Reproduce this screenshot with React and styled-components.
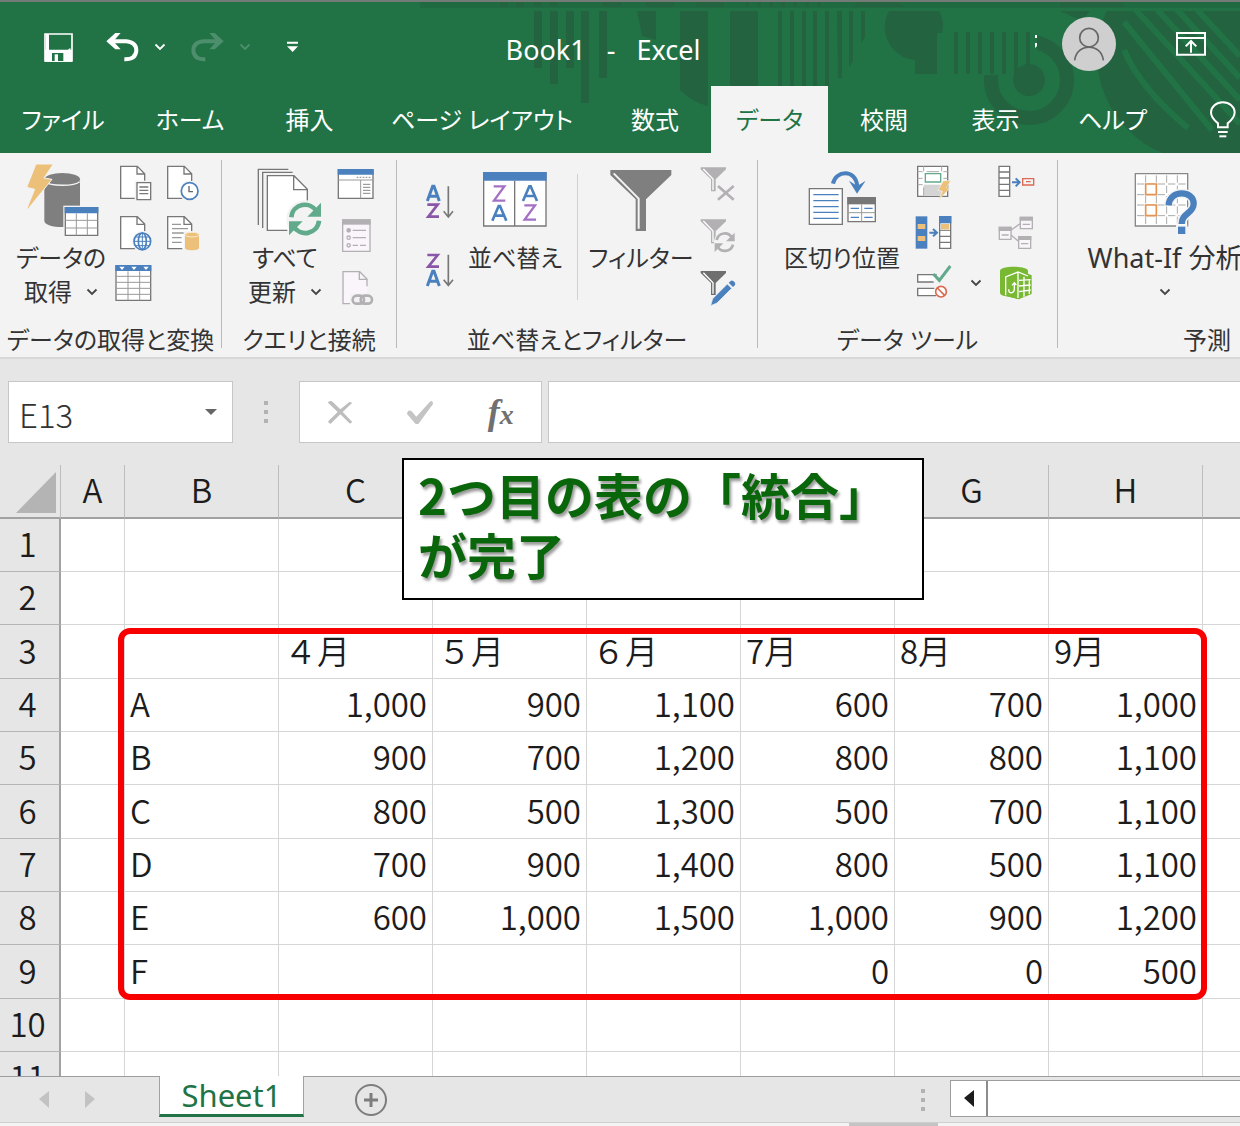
import React from "react";
import styled, { createGlobalStyle, css } from "styled-components";

const GREEN = "#217346";
const DARK = "#23633f";
const BLUE = "#4a80bd";
const GRAY = "#7f7f7f";
const PALE = "#b3b0b3";
const AMBER = "#ecc078";
const TEAL = "#62aa8c";
const UI = `"Noto Sans", "Noto Sans CJK JP", sans-serif`;
const CELL = `"Noto Sans CJK JP", sans-serif`;

const GlobalStyle = createGlobalStyle`
  * { box-sizing: border-box; }
  body { margin: 0; background: #e6e6e6; }
  button, input { font: inherit; color: inherit; margin: 0; padding: 0; border: 0; background: none; border-radius: 0; }
  svg { display: block; overflow: visible; flex: none; }
`;

const Window = styled.div`
  display: flex;
  flex-direction: column;
  height: 100vh;
  overflow: hidden;
  font-family: ${UI};
  font-size: 24px;
  line-height: 34px;
  font-feature-settings: "palt";
  color: #333;
`;

/* ---------- title bar and tabs ---------- */
const Header = styled.header`
  position: relative;
  background: ${GREEN};
  border-top: 2px solid #747b76;
  color: #fff;
  overflow: hidden;
`;
const Backdrop = styled.svg`
  position: absolute;
  top: -2px;
  right: 0;
`;
const TitleBar = styled.div`
  position: relative;
  display: grid;
  grid-template-columns: 400px 406px 1fr;
  align-items: center;
  height: 84px;
`;
const QuickAccess = styled.div`
  display: flex;
  align-items: center;
  padding: 6px 0 0 44px;
`;
const ToolButton = styled.button`
  display: flex;
  flex: none;
  align-items: center;
  justify-content: center;
  width: ${(p) => p.$w || 36}px;
  height: 36px;
  && { margin-left: ${(p) => p.$gap || 0}px; }
`;
const Title = styled.h1`
  margin: 0;
  padding-top: 12px;
  font-size: 27px;
  font-weight: 400;
  text-align: center;
  white-space: pre;
`;
const Account = styled.div`
  display: flex;
  align-items: center;
  justify-content: flex-end;
  gap: 60px;
  padding-right: 34px;
`;
const Avatar = styled.button`
  && { border-radius: 50%; background: #d0cfd0; }
  width: 54px;
  height: 54px;
`;
const Tabs = styled.nav`
  position: relative;
  display: flex;
  height: 67px;
`;
const Tab = styled.button`
  flex: none;
  width: ${(p) => p.$w}px;
  white-space: nowrap;
  ${(p) =>
    p.$active &&
    css`
      && { background: #f3f3f3; color: ${GREEN}; }
    `}
`;
const Tell = styled.button`
  display: flex;
  align-items: center;
  && { padding-left: 36px; }
`;

/* ---------- ribbon ---------- */
const Ribbon = styled.div`
  display: flex;
  flex: none;
  overflow: hidden;
  background: #f3f3f3;
  border-bottom: 2px solid #d8d8d8;
`;
const Group = styled.section`
  flex: none;
  display: flex;
  flex-direction: column;
  justify-content: space-between;
  width: ${(p) => p.$w}px;
  height: 204px;
  padding-top: 12px;
`;
const Body = styled.div`
  display: flex;
  align-items: flex-start;
  gap: 8px;
  padding-left: ${(p) => p.$left}px;
`;
const GroupLabel = styled.div`
  text-align: center;
  white-space: nowrap;
`;
const Rule = styled.div`
  flex: none;
  width: 1px;
  margin: 7px 0 9px;
  background: #b9b9b9;
`;
const InnerRule = styled.div`
  width: 1px;
  height: 126px;
  margin: 9px 4px 0;
  background: #d0d0d0;
`;
const Big = styled.button`
  display: flex;
  flex-direction: column;
  align-items: center;
  width: ${(p) => p.$w}px;
  white-space: nowrap;
`;
const Line = styled.span`
  display: flex;
  align-items: center;
  justify-content: center;
  gap: 14px;
  height: 34px;
  font-size: ${(p) => (p.$latin ? 27 : 24)}px;
  &:first-of-type { margin-top: 4px; }
`;
const Smalls = styled.div`
  display: grid;
  grid-template-columns: ${(p) => p.$cols || "36px"};
  grid-auto-rows: 36px;
  gap: ${(p) => p.$gap || "14px 12px"};
  padding-top: ${(p) => p.$top || 0}px;
  justify-items: center;
`;

/* ---------- formula bar ---------- */
const Workspace = styled.main`
  position: relative;
  flex: 1;
  min-height: 0;
  overflow: hidden;
  background: #fff;
  font-family: ${CELL};
`;
const FormulaBar = styled.div`
  display: flex;
  align-items: center;
  padding: 22px 0 22px 8px;
  background: #e6e6e6;
`;
const Field = styled.div`
  display: flex;
  align-items: center;
  width: ${(p) => p.$w}px;
  height: 62px;
  background: #fff;
  border: 1px solid #c6c6c6;
`;
const NameInput = styled.input`
  width: 180px;
  height: 60px;
  && { padding: 4px 0 0 10px; font-size: 33px; font-weight: 300; color: #333; }
`;
const Grip = styled.div`
  display: grid;
  gap: 5px;
  width: ${(p) => p.$w}px;
  justify-content: center;
  align-content: center;
  &::before, &::after, & > i { content: ""; width: 4px; height: 4px; background: #b2b2b2; }
`;
const FormulaInput = styled.input`
  flex: 1;
  min-width: 0;
  height: 62px;
  && { margin-left: 6px; padding: 0 10px; background: #fff; border: 1px solid #c6c6c6; border-right: 0; }
`;
const FxButton = styled.button`
  flex: 1;
  height: 60px;
  display: flex;
  align-items: center;
  justify-content: center;
  && { font: italic bold 36px/40px "Liberation Serif", serif; color: #707070; }
  small { font-size: 28px; padding-top: 6px; }
`;

/* ---------- sheet ---------- */
const Sheet = styled.table`
  table-layout: fixed;
  width: 100%;
  border-collapse: separate;
  border-spacing: 0;
  font-size: 33px;
  line-height: 40px;
  font-weight: 350;
  font-feature-settings: normal;
  color: #1c1c1c;
  tbody tr { height: 53px; }
  tbody tr:nth-child(3n) { height: 54px; }
  th { font-weight: 350; }
  tr > :last-child { border-right: 0; }
`;
const ColHead = styled.th`
  height: 54px;
  padding: 0 0 4px;
  background: #e6e6e6;
  border-right: 1px solid #bdbdbd;
  border-bottom: 2px solid #a2a2a2;
`;
const Corner = styled(ColHead)`
  svg { margin: 6px 4px 0 auto; }
`;
const RowHead = styled.th`
  padding: 0 4px 4px 0;
  background: #e6e6e6;
  border-right: 2px solid #a2a2a2;
  border-bottom: 1px solid #b5b5b5;
`;
const Cell = styled.td`
  padding: 0 5px 4px;
  white-space: nowrap;
  text-align: ${(p) => (p.$num ? "right" : "left")};
  border-right: 1px solid #d6d6d6;
  border-bottom: 1px solid #d6d6d6;
`;
const Highlight = styled.div`
  position: absolute;
  top: 269px;
  left: 118px;
  width: 1089px;
  height: 372px;
  border: 6px solid #f80000;
  border-radius: 12px;
`;
const Callout = styled.p`
  position: absolute;
  top: 99px;
  left: 402px;
  width: 522px;
  height: 142px;
  margin: 0;
  padding: 4px 14px;
  background: #fff;
  border: 2px solid #000;
  font-size: 49px;
  line-height: 60px;
  font-weight: 700;
  font-feature-settings: normal;
  color: #0a660a;
  text-shadow: 2px 3px 3px #9a9a9a;
`;

/* ---------- bottom bars ---------- */
const SheetBar = styled.footer`
  display: flex;
  flex: none;
  height: 46px;
  background: #e6e6e6;
  border-top: 1px solid #9d9d9d;
`;
const Pager = styled.div`
  display: flex;
  align-items: center;
  justify-content: center;
  gap: 10px;
  width: 159px;
  padding-right: 25px;
`;
const SheetTab = styled.button`
  width: 145px;
  height: 41px;
  && {
    margin-top: -1px;
    background: #fff;
    color: ${GREEN};
    font-size: 31px;
    border: 1px solid #a2a2a2;
    border-top: 0;
    border-bottom: 3px solid ${GREEN};
  }
`;
const AddSheet = styled.button`
  width: 36px;
  height: 45px;
  && { margin-left: 50px; margin-right: auto; }
`;
const Scroll = styled.div`
  display: flex;
  width: 290px;
  height: 37px;
  margin-top: 3px;
  background: #fff;
  border: 1px solid #9d9d9d;
  border-right: 0;
`;
const ScrollButton = styled.button`
  display: flex;
  align-items: center;
  justify-content: center;
  width: 37px;
  && { border-right: 2px solid #8c8c8c; }
`;
const Status = styled.div`
  flex: none;
  display: flex;
  justify-content: flex-end;
  height: 4px;
  padding-right: 302px;
  background: #f3f3f3;
  border-top: 1px solid #cfcfcf;
  &::after { content: ""; width: 89px; background: #c4c4c4; }
`;

/* ---------- drawings: three drawing units to one pixel ---------- */
const Draw = ({ x, y, w = 36, h = w, children }) => (
  <svg width={w} height={h} viewBox={`${x} ${y} ${w * 3} ${h * 3}`} fill="none" aria-hidden="true">
    {children}
  </svg>
);
const Chevron = ({ color = "#444" }) => (
  <svg width="12" height="8" viewBox="0 0 12 8" fill="none" aria-hidden="true">
    <path d="M1.500 1.500L6 6L10.500 1.500" stroke={color} strokeWidth="1.800" />
  </svg>
);
const Doc = ({ x, y, stroke = "#777", fill = "#fff" }) => (
  <g transform={`translate(${x} ${y})`} stroke={stroke} strokeWidth="4">
    <path d="M0 0H50L72 22V96H0Z" fill={fill} stroke="none" />
    <path d="M44 96H0V0H50L72 22V44M49 0V23H72" />
  </g>
);
const Funnel = ({ x, y, c }) => (
  <g transform={`translate(${x} ${y})`}>
    <path d="M0 0H76V6L45 36V72H31V36L0 6Z" fill={c} />
    <path d="M8 5L37 35V68" stroke="#fff" strokeWidth="4" />
  </g>
);
const SmallButton = ({ label, x, y, children }) => (
  <ToolButton aria-label={label}>
    <Draw x={x} y={y}>{children}</Draw>
  </ToolButton>
);

const HeaderArt = () => (
  <Backdrop width="820" height="153" viewBox="420 0 820 153" fill={DARK} aria-hidden="true">
    <defs>
      <clipPath id="disc"><circle cx="1203" cy="55" r="106" /></clipPath>
      <clipPath id="ring"><path d="M980 75H1037V30H1080V130H980Z" /></clipPath>
    </defs>
    <path d="M534 11h8v57h-8zM550 11h8v73h-8zM566 11h8v57h-8zM581 11h8v92h-8zM599 11h8v67h-8z" />
    <path d="M637 11h19v29l-14-4zM680 11h28v95q-16-4-28-16zM730 11h28v75h-28z" />
    <path d="M778 11h4v75h-4zM790 11h4v75h-4zM802 11h4v75h-4zM813 11h4v75h-4zM825 11h4v75h-4zM837 11h5v67h-4zM849 11h4v50l-4 6zM861 11h4v26l-4 6z" />
    <path d="M889 11h50q6 10 3 22h-5v41h-22v-14a33 33 0 0 1-26-49z" />
    <path d="M954 32h4v42h-4zM966 32h4v42h-4zM978 32h4v42h-4zM990 32h4v42h-4zM1002 32h4v42h-4zM1014 32h4v42h-4zM1026 32h4v34h-4z" />
    <g clipPath="url(#ring)">
      <circle cx="1029" cy="80" r="38" fill="none" stroke={DARK} strokeWidth="14" />
    </g>
    <circle cx="1029" cy="80" r="16" />
    <g clipPath="url(#disc)">
      <rect x="1090" y="11" width="150" height="142" />
      <g stroke={GREEN} strokeWidth="6">
        <path d="M1124 50Q1140 88 1188 128M1124 22L1212 130M1134 8L1240 124M1152 4L1240 100M1170 2L1240 78M1188 0L1240 56" />
      </g>
    </g>
    <path d="M1060 11h30l-8 10z" />
    <rect x="420" y="2" width="820" height="6" fill="#1f6a41" />
    <path d="M500 2h8v5h-8zM516 2h8v5h-8zM534 2h8v5h-8zM550 2h8v5h-8zM602 2h20v5h-20zM646 2h28v5h-28zM696 2h28v5h-28zM745 2h4v5h-4zM757 2h4v5h-4zM769 2h4v5h-4zM781 2h4v5h-4zM793 2h4v5h-4zM805 2h4v5h-4zM817 2h4v5h-4zM858 2h40l6 5h-50zM1060 2h60l6 5h-66z" />
    <path d="M1035 35h2v3h-2zM1035 43h2v3l-2 2z" fill="#fff" />
  </Backdrop>
);

const TABS = [
  ["ファイル", 126], ["ホーム", 128], ["挿入", 111], ["ページ レイアウト", 234], ["数式", 112],
  ["データ", 117], ["校閲", 112], ["表示", 111], ["ヘルプ", 123],
];
const COLUMNS = ["A", "B", "C", "D", "E", "F", "G", "H", "I"];
/* headings that lie clear of the callout and inside the window */
const NAMED = ["A", "B", "C", "G", "H"];
const ROWS = [
  [], [],
  ["", "", "４月", "５月", "６月", "7月", "8月", "9月"],
  ["", "A", "1,000", "900", "1,100", "600", "700", "1,000"],
  ["", "B", "900", "700", "1,200", "800", "800", "1,100"],
  ["", "C", "800", "500", "1,300", "500", "700", "1,100"],
  ["", "D", "700", "900", "1,400", "800", "500", "1,100"],
  ["", "E", "600", "1,000", "1,500", "1,000", "900", "1,200"],
  ["", "F", "", "", "", "0", "0", "500"],
  [], [],
];

const RibbonArea = () => (
  <Ribbon>
    <Group $w={221}>
      <Body $left={16}>
        <Big $w={90}>
          <Draw x={75} y={45} w={72}>
            <path d="M133 92V212C133 224 158 231 187 231S240 224 240 212V92Z" fill={GRAY} />
            <ellipse cx="187" cy="88" rx="53" ry="19" fill={GRAY} />
            <path d="M136 96C150 108 222 110 239 95" stroke="#f3f3f3" strokeWidth="4" />
            <path d="M108 42H160L132 84L156 88L84 177H80L104 118L80 112Z" fill={AMBER} stroke="#f3f3f3" strokeWidth="3" />
            <rect x="190" y="167" width="109" height="94" fill="#f3f3f3" />
            <path d="M196 173H293V256H196Z" fill="#fff" stroke="#777" strokeWidth="4" />
            <path d="M194 171H295V190H194Z" fill={BLUE} />
            <path d="M196 211H293M196 234H293M229 190V256M262 190V256" stroke="#999" strokeWidth="3" />
          </Draw>
          <Line>データの</Line>
          <Line>取得<Chevron /></Line>
        </Big>
        <Smalls $cols="36px 36px">
          <SmallButton label="テキストまたは CSV から" x={342} y={45}>
            <Doc x={362} y={49} />
            <path d="M404 92H458V155H404Z" fill="#f3f3f3" />
            <path d="M411 98H452V149H411ZM418 111H445M418 121H445M418 131H445" fill="#fff" stroke="#777" strokeWidth="4" />
          </SmallButton>
          <SmallButton label="最近使ったソース" x={486} y={45}>
            <Doc x={503} y={49} />
            <circle cx="569" cy="123" r="31" fill="#f3f3f3" />
            <circle cx="569" cy="123" r="25" fill="#fff" stroke={BLUE} strokeWidth="5" />
            <path d="M567 108V125H579" stroke="#666" strokeWidth="4" />
          </SmallButton>
          <SmallButton label="Web から" x={342} y={195}>
            <Doc x={362} y={200} />
            <circle cx="427" cy="274" r="31" fill="#f3f3f3" />
            <g stroke={BLUE} strokeWidth="5">
              <circle cx="427" cy="274" r="25" fill="#fff" />
              <ellipse cx="427" cy="274" rx="12" ry="25" />
              <path d="M402 274H452M407 261H447M407 287H447M427 249V299" strokeWidth="3" />
            </g>
          </SmallButton>
          <SmallButton label="既存の接続" x={486} y={195}>
            <Doc x={503} y={200} />
            <path d="M516 223H543M516 236H564M516 249H552M516 263H545M516 277H545" stroke="#999" strokeWidth="4" />
            <path d="M551 244H600V303H551Z" fill="#f3f3f3" />
            <path d="M555 254V294C555 303 597 303 597 294V254Z" fill={AMBER} />
            <ellipse cx="576" cy="254" rx="21" ry="7" fill={AMBER} stroke="#f8ead0" strokeWidth="3" />
          </SmallButton>
          <SmallButton label="テーブルまたは範囲から" x={342} y={345}>
            <path d="M348 348H452V451H348Z" fill="#fff" stroke="#777" strokeWidth="4" />
            <path d="M346 345H454V363H346Z" fill={BLUE} />
            <path d="M358 350H374L366 360ZM394 350H410L402 360ZM430 350H446L438 360Z" fill="#fff" />
            <path d="M348 379H452M348 397H452M348 415H452M348 433H452M384 364V451M419 364V451" stroke="#999" strokeWidth="3" />
          </SmallButton>
        </Smalls>
      </Body>
      <GroupLabel>データの取得と変換</GroupLabel>
    </Group>
    <Rule />
    <Group $w={174}>
      <Body $left={18}>
        <Big $w={90}>
          <Draw x={747} y={45} w={72}>
            <path d="M775 225V58H865M788 234V67H878" stroke="#777" strokeWidth="4" />
            <path d="M802 77H882L922 118V241H802Z" fill="#fff" />
            <path d="M862 241H802V77H882L922 118V155M881 77V119H922" stroke="#777" strokeWidth="4" />
            <circle cx="915" cy="207" r="56" fill="#f3f3f3" />
            <g stroke={TEAL} strokeWidth="14">
              <path d="M874 202C878 160 930 152 950 184M957 212C952 254 900 262 880 228" />
            </g>
            <path d="M963 158V200H922ZM867 256V214H908Z" fill={TEAL} />
          </Draw>
          <Line>すべて</Line>
          <Line>更新<Chevron /></Line>
        </Big>
        <Smalls>
          <SmallButton label="クエリと接続" x={1014} y={45}>
            <path d="M1015 60H1119V145H1015Z" fill="#fff" stroke="#777" strokeWidth="4" />
            <path d="M1013 57H1121V74H1013Z" fill={BLUE} />
            <path d="M1015 90H1119M1082 90V145" stroke="#999" strokeWidth="3" />
            <path d="M1070 82H1114" stroke="#999" strokeWidth="4" strokeDasharray="5 4" />
            <path d="M1089 103H1111M1089 112H1111M1089 121H1111M1089 130H1111" stroke="#888" strokeWidth="3" />
          </SmallButton>
          <SmallButton label="プロパティ" x={1014} y={195}>
            <path d="M1028 210H1110V304H1028Z" fill="#faf5fb" stroke={PALE} strokeWidth="4" />
            <path d="M1026 208H1112V224H1026Z" fill={PALE} />
            <g stroke={PALE} strokeWidth="4">
              <path d="M1058 241H1098M1058 263H1098M1058 286H1074M1080 286H1098" />
              <circle cx="1046" cy="241" r="5" fill={PALE} /><circle cx="1046" cy="263" r="5" /><circle cx="1046" cy="286" r="5" />
            </g>
          </SmallButton>
          <SmallButton label="リンクの編集" x={1014} y={345}>
            <Doc x={1029} y={365} stroke={PALE} fill="#faf5fb" />
            <rect x="1050" y="430" width="74" height="38" fill="#f3f3f3" />
            <g stroke={PALE} strokeWidth="8">
              <rect x="1058" y="437" width="34" height="24" rx="12" /><rect x="1082" y="437" width="34" height="24" rx="12" />
            </g>
          </SmallButton>
        </Smalls>
      </Body>
      <GroupLabel>クエリと接続</GroupLabel>
    </Group>
    <Rule />
    <Group $w={360}>
      <Body $left={24}>
        <Smalls $top={19} $gap="32px">
          <SmallButton label="昇順" x={93} y={102}>
            <path d="M112 153L128 109H132L148 153M118 139H142" stroke={BLUE} strokeWidth="9" />
            <path d="M112 164H143L115 200H147" stroke="#8a56a8" strokeWidth="8" />
            <path d="M175 109V201M161 184L175 201L189 184" stroke="#777" strokeWidth="5" />
          </SmallButton>
          <SmallButton label="降順" x={93} y={306}>
            <path d="M112 315H143L115 350H147" stroke="#8a56a8" strokeWidth="8" />
            <path d="M112 408L128 364H132L148 408M118 394H142" stroke={BLUE} strokeWidth="9" />
            <path d="M175 314V406M161 389L175 406L189 389" stroke="#777" strokeWidth="5" />
          </SmallButton>
        </Smalls>
        <Big $w={100}>
          <Draw x={267} y={45} w={72}>
            <path d="M281 68H468V228H281Z" fill="#fff" stroke="#777" strokeWidth="4" />
            <path d="M279 66H470V92H279Z" fill={BLUE} />
            <path d="M374 92V228" stroke="#777" strokeWidth="4" />
            <g stroke="#a470c4" strokeWidth="7">
              <path d="M311 109H343L312 152H346M403 166H435L404 209H438" />
            </g>
            <g stroke={BLUE} strokeWidth="8">
              <path d="M307 212L326 168H330L349 212M314 197H342M399 153L418 109H422L441 153M406 138H434" />
            </g>
          </Draw>
          <Line>並べ替え</Line>
        </Big>
        <InnerRule />
        <Big $w={102}>
          <Draw x={645} y={45} w={72}>
            <path d="M661 60H844V75L768 148V243H737V148L661 75Z" fill={GRAY} />
            <path d="M671 70L746 146V236" stroke="#f3f3f3" strokeWidth="6" />
          </Draw>
          <Line>フィルター</Line>
        </Big>
        <Smalls>
          <SmallButton label="クリア" x={930} y={45}>
            <Funnel x={932} y={52} c={PALE} />
            <path d="M984 108L1031 149M1031 108L984 149" stroke={PALE} strokeWidth="8" />
          </SmallButton>
          <SmallButton label="再適用" x={930} y={195}>
            <Funnel x={932} y={208} c={PALE} />
            <circle cx="1004" cy="276" r="32" fill="#f3f3f3" />
            <path d="M980 270C986 246 1016 244 1026 264M1029 284C1023 308 992 308 983 290" stroke={PALE} strokeWidth="8" />
            <path d="M1034 248V274H1008ZM974 306V280H1000Z" fill={PALE} />
          </SmallButton>
          <SmallButton label="詳細設定" x={930} y={345}>
            <Funnel x={932} y={363} c="#6f6f6f" />
            <path d="M962 467L968 446L1012 402L1025 415L981 459Z" fill={BLUE} stroke="#f3f3f3" strokeWidth="2" />
            <path d="M1016 398L1023 392Q1029 390 1034 397Q1037 402 1035 405L1029 411Z" fill={BLUE} />
          </SmallButton>
        </Smalls>
      </Body>
      <GroupLabel>並べ替えとフィルター</GroupLabel>
    </Group>
    <Rule />
    <Group $w={299}>
      <Body $left={18}>
        <Big $w={132}>
          <Draw x={168} y={45} w={72}>
            <path d="M178 116H277V223H178Z" fill="#fff" stroke="#777" strokeWidth="4" />
            <path d="M190 134H266M190 152H266M190 170H266M190 187H266M190 205H266" stroke={BLUE} strokeWidth="4" />
            <path d="M249 101C256 62 316 54 322 108" stroke={BLUE} strokeWidth="12" />
            <path d="M297 92L321 131L347 92L322 108Z" fill={BLUE} />
            <path d="M294 143H376V215H294Z" fill="#fff" stroke="#777" strokeWidth="4" />
            <path d="M292 141H378V163H292Z" fill="#777" />
            <path d="M335 163V215M294 188H376" stroke="#999" strokeWidth="3" />
            <path d="M302 175H327M343 175H368M302 202H327M343 202H368" stroke={BLUE} strokeWidth="4" />
          </Draw>
          <Line>区切り位置</Line>
        </Big>
        <Smalls $cols="36px 47px 36px" $gap="14px 0">
          <SmallButton label="フラッシュ フィル" x={498} y={45}>
            <path d="M503 49H593V139H503Z" fill="#fff" stroke="#777" strokeWidth="4" />
            <path d="M521 104H575V137H521Z" fill="#d4d4d4" />
            <path d="M503 65H518M530 65H567M580 65H593M503 85H518M503 104H518M580 85H593M521 49V64M575 49V64M521 112V137" stroke="#aaa" strokeWidth="3" />
            <path d="M526 71H572V96H526Z" fill="#fff" stroke={TEAL} strokeWidth="4" />
            <path d="M580 92H602L590 113L600 115L566 149L577 124L564 121Z" fill={AMBER} stroke="#f3f3f3" strokeWidth="2" />
          </SmallButton>
          <span />
          <SmallButton label="重複の削除" x={747} y={45}>
            <path d="M747 49H779V139H747ZM747 66H779M747 84H779M747 103H779M747 121H779" fill="#fff" stroke="#777" strokeWidth="4" />
            <path d="M786 97H806M797 85L809 97L797 109" stroke={BLUE} strokeWidth="6" />
            <path d="M818 86H851V105H818ZM828 95H842" stroke="#dc6a50" strokeWidth="4" />
          </SmallButton>
          <SmallButton label="統合" x={498} y={195}>
            <path d="M497 199H532V296H497Z" fill={BLUE} />
            <path d="M503 222H526V237H503ZM503 258H526V273H503Z" fill={AMBER} />
            <path d="M569 200H602V295H569ZM569 259H602M569 277H602" fill="#fff" stroke="#777" strokeWidth="4" />
            <path d="M567 198H604V220H567Z" fill={BLUE} />
            <path d="M573 222H598V238H573Z" fill={AMBER} />
            <path d="M569 241H602" stroke="#777" strokeWidth="3" />
            <path d="M538 248H558M549 237L561 248L549 259" stroke={BLUE} strokeWidth="6" />
          </SmallButton>
          <span />
          <SmallButton label="リレーションシップ" x={747} y={195}>
            <g stroke={PALE} strokeWidth="4" fill="#faf5fb">
              <path d="M784 240L810 221M784 256L806 274M748 232H783V268H748ZM811 202H847V236H811ZM806 260H842V295H806Z" />
              <path d="M755 255H776M818 223H840M813 281H835" />
            </g>
            <path d="M746 230H785V243H746ZM809 200H849V212H809ZM804 258H844V270H804Z" fill={PALE} />
          </SmallButton>
          <SmallButton label="データの入力規則" x={498} y={345}>
            <path d="M560 374H503V396H551M553 415H503V437H558" fill="#fff" stroke="#777" strokeWidth="4" />
            <path d="M550 372L568 391L601 348" stroke={TEAL} strokeWidth="9" />
            <circle cx="573" cy="425" r="16" fill="#fff" stroke="#dc6a50" strokeWidth="5" />
            <path d="M562 414L584 436" stroke="#dc6a50" strokeWidth="5" />
          </SmallButton>
          <ToolButton $w={20} aria-label="入力規則のメニュー"><Chevron /></ToolButton>
          <SmallButton label="データ モデルの管理" x={747} y={345}>
            <path d="M750 362C752 346 830 346 834 362V430L806 447L764 438C752 436 750 432 750 426Z" fill="#78b833" />
            <path d="M763 377L800 358L845 376V432L806 448L763 436Z" fill="#78b833" />
            <path d="M767 436V381L804 366L834 378M804 366V444M822 380V440M838 388V432M807 391L842 389M807 408L842 405M807 425L842 420" stroke="#fff" strokeWidth="4" />
            <path d="M776 418Q776 430 786 428Q793 426 793 417V400M786 406L793 398L799 405" stroke="#fff" strokeWidth="4" />
          </SmallButton>
        </Smalls>
      </Body>
      <GroupLabel>データ ツール</GroupLabel>
    </Group>
    <Rule />
    <Group $w={298}>
      <Body $left={12}>
        <Big $w={190}>
          <Draw x={1137} y={45} w={72}>
            <path d="M1156 71H1313V228H1156Z" fill="#fff" stroke="#888" strokeWidth="4" />
            <path d="M1187 71V228M1219 71V228M1250 71V228M1282 71V228M1156 102H1313M1156 134H1313M1156 165H1313M1156 197H1313" stroke="#aaa" strokeWidth="3" strokeDasharray="22 9" strokeDashoffset="-5" />
            <path d="M1187 102H1219V134H1187ZM1187 165H1219V197H1187Z" fill="#fff" stroke="#e8924f" strokeWidth="5" />
            <path d="M1256 166C1258 118 1332 120 1331 162C1330 192 1295 188 1295 222" stroke="#f3f3f3" strokeWidth="28" />
            <rect x="1278" y="224" width="34" height="34" fill="#f3f3f3" />
            <path d="M1256 166C1258 118 1332 120 1331 162C1330 192 1295 188 1295 222" stroke={BLUE} strokeWidth="19" />
            <rect x="1284" y="230" width="22" height="22" fill={BLUE} />
          </Draw>
          <Line $latin>What-If 分析</Line>
          <Line><Chevron /></Line>
        </Big>
      </Body>
      <GroupLabel>予測</GroupLabel>
    </Group>
  </Ribbon>
);

export default function App() {
  return (
    <Window>
      <GlobalStyle />
      <Header>
        <HeaderArt />
        <TitleBar>
          <QuickAccess>
            <ToolButton $w={29} aria-label="上書き保存">
              <Draw x={132} y={96} w={29}>
                <path d="M135 99H216V180H135Z" stroke="#fff" strokeWidth="5" />
                <path d="M135 146H216V182H135ZM138 99H147V150H138Z" fill="#fff" />
                <path d="M156 156H190V180H156Z" fill={GREEN} />
                <path d="M164 160H174V180H164Z" fill="#fff" />
                <path d="M140 140L148 148H203L211 140V151H140Z" fill="#fff" />
              </Draw>
            </ToolButton>
            <ToolButton $w={33} $gap={33} aria-label="元に戻す">
              <Draw x={317} y={99} w={33} h={30}>
                <path d="M325 127H378Q408 130 408 155Q406 182 372 181" stroke="#fff" strokeWidth="12" />
                <path d="M318 127L345 102H361L339 127L361 151H345Z" fill="#fff" />
              </Draw>
            </ToolButton>
            <ToolButton $w={12} $gap={15} aria-label="元に戻す履歴"><Chevron color="#fff" /></ToolButton>
            <ToolButton $w={33} $gap={25} aria-label="やり直し">
              <Draw x={571} y={99} w={33} h={30}>
                <path d="M661 127H608Q578 130 578 155Q580 182 614 181" stroke="#4d8f6c" strokeWidth="12" />
                <path d="M669 127L642 102H626L648 127L626 151H642Z" fill="#4d8f6c" />
              </Draw>
            </ToolButton>
            <ToolButton $w={12} $gap={15} aria-label="やり直し履歴"><Chevron color="#4d8f6c" /></ToolButton>
            <ToolButton $w={12} $gap={36} aria-label="クイック アクセスのカスタマイズ">
              <Draw x={861} y={127} w={12}>
                <path d="M861 129H894V135H861ZM861 143H894L878 160Z" fill="#fff" />
              </Draw>
            </ToolButton>
          </QuickAccess>
          <Title>{"Book1   -   Excel"}</Title>
          <Account>
            <Avatar aria-label="アカウント">
              <Draw x={696} y={53} w={54}>
                <circle cx="777" cy="115" r="28" stroke="#666" strokeWidth="5" />
                <path d="M734 183C740 130 814 130 820 183" stroke="#666" strokeWidth="5" />
              </Draw>
            </Avatar>
            <ToolButton $w={30} aria-label="リボンの表示オプション">
              <Draw x={1039} y={98} w={30} h={24}>
                <path d="M1042 101H1126V166H1042ZM1042 116H1126M1084 160V126M1068 141L1084 125L1100 141" stroke="#fff" strokeWidth="6" />
              </Draw>
            </ToolButton>
          </Account>
        </TitleBar>
        <Tabs>
          {TABS.map(([name, w]) => (
            <Tab key={name} $w={w} $active={name === "データ"}>{name}</Tab>
          ))}
          <Tell aria-label="操作アシスト">
            <Draw x={1140} y={302} w={26} h={36}>
              <path d="M1164 378V366Q1143 350 1143 333A35 30 0 0 1 1214 333Q1214 350 1193 366V378ZM1164 392H1193" stroke="#fff" strokeWidth="6" />
              <path d="M1168 405H1189" stroke="#fff" strokeWidth="6" />
            </Draw>
          </Tell>
        </Tabs>
      </Header>

      <RibbonArea />

      <Workspace>
        <FormulaBar>
          <Field $w={225}>
            <NameInput aria-label="名前ボックス" defaultValue="E13" />
            <ToolButton $w={44} aria-label="名前の一覧">
              <svg width="12" height="6"><path d="M0 0H12L6 6Z" fill="#666" /></svg>
            </ToolButton>
          </Field>
          <Grip $w={66}><i /></Grip>
          <Field $w={243}>
            <FxButton aria-label="キャンセル">
              <Draw x={916} y={134} w={25}>
                <path d="M916 142Q918 134 928 138L953 162L980 140L989 142L960 170L989 200L982 205L953 177L924 205Q914 202 918 196L945 170Z" fill="#bdbdbd" />
              </Draw>
            </FxButton>
            <FxButton aria-label="入力">
              <Draw x={1140} y={136} w={27} h={25}>
                <path d="M1140 178Q1142 162 1154 170L1168 186L1208 142Q1218 134 1218 148L1174 208H1166Z" fill="#c4c4c4" />
              </Draw>
            </FxButton>
            <FxButton aria-label="関数の挿入">f<small>x</small></FxButton>
          </Field>
          <FormulaInput aria-label="数式バー" />
        </FormulaBar>
        <Sheet>
          <colgroup>
            <col width="61" />
            <col width="64" />
            {COLUMNS.slice(1, 8).map((c) => <col key={c} width="154" />)}
            <col />
          </colgroup>
          <thead>
            <tr>
              <Corner aria-label="すべて選択">
                <svg width="40" height="41"><path d="M40 0V41H0Z" fill="#b4b4b4" /></svg>
              </Corner>
              {COLUMNS.map((c) => (
                <ColHead key={c} scope="col" aria-label={c}>{NAMED.includes(c) ? c : null}</ColHead>
              ))}
            </tr>
          </thead>
          <tbody>
            {ROWS.map((row, r) => (
              <tr key={r}>
                <RowHead scope="row">{r + 1}</RowHead>
                {COLUMNS.map((c, i) => (
                  <Cell key={c} $num={/^[\d,]+$/.test(row[i] || "")}>{row[i]}</Cell>
                ))}
              </tr>
            ))}
          </tbody>
        </Sheet>
        <Highlight />
        <Callout>2つ目の表の「統合」<br />が完了</Callout>
      </Workspace>

      <SheetBar>
        <Pager>
          <ToolButton aria-label="前のシート"><svg width="10" height="17"><path d="M10 0V17L0 8Z" fill="#c2c2c2" /></svg></ToolButton>
          <ToolButton aria-label="次のシート"><svg width="10" height="17"><path d="M0 0V17L10 8Z" fill="#c2c2c2" /></svg></ToolButton>
        </Pager>
        <SheetTab>Sheet1</SheetTab>
        <AddSheet aria-label="新しいシート">
          <svg width="34" height="34" viewBox="0 0 34 34" fill="none" stroke="#7d7d7d" strokeWidth="2">
            <circle cx="17" cy="17" r="15" />
            <path d="M17 10V24M10 17H24" strokeWidth="3" />
          </svg>
        </AddSheet>
        <Grip $w={54}><i /></Grip>
        <Scroll>
          <ScrollButton aria-label="左へスクロール">
            <svg width="10" height="17"><path d="M10 0V17L0 8Z" fill="#1c1c1c" /></svg>
          </ScrollButton>
        </Scroll>
      </SheetBar>
      <Status />
    </Window>
  );
}
